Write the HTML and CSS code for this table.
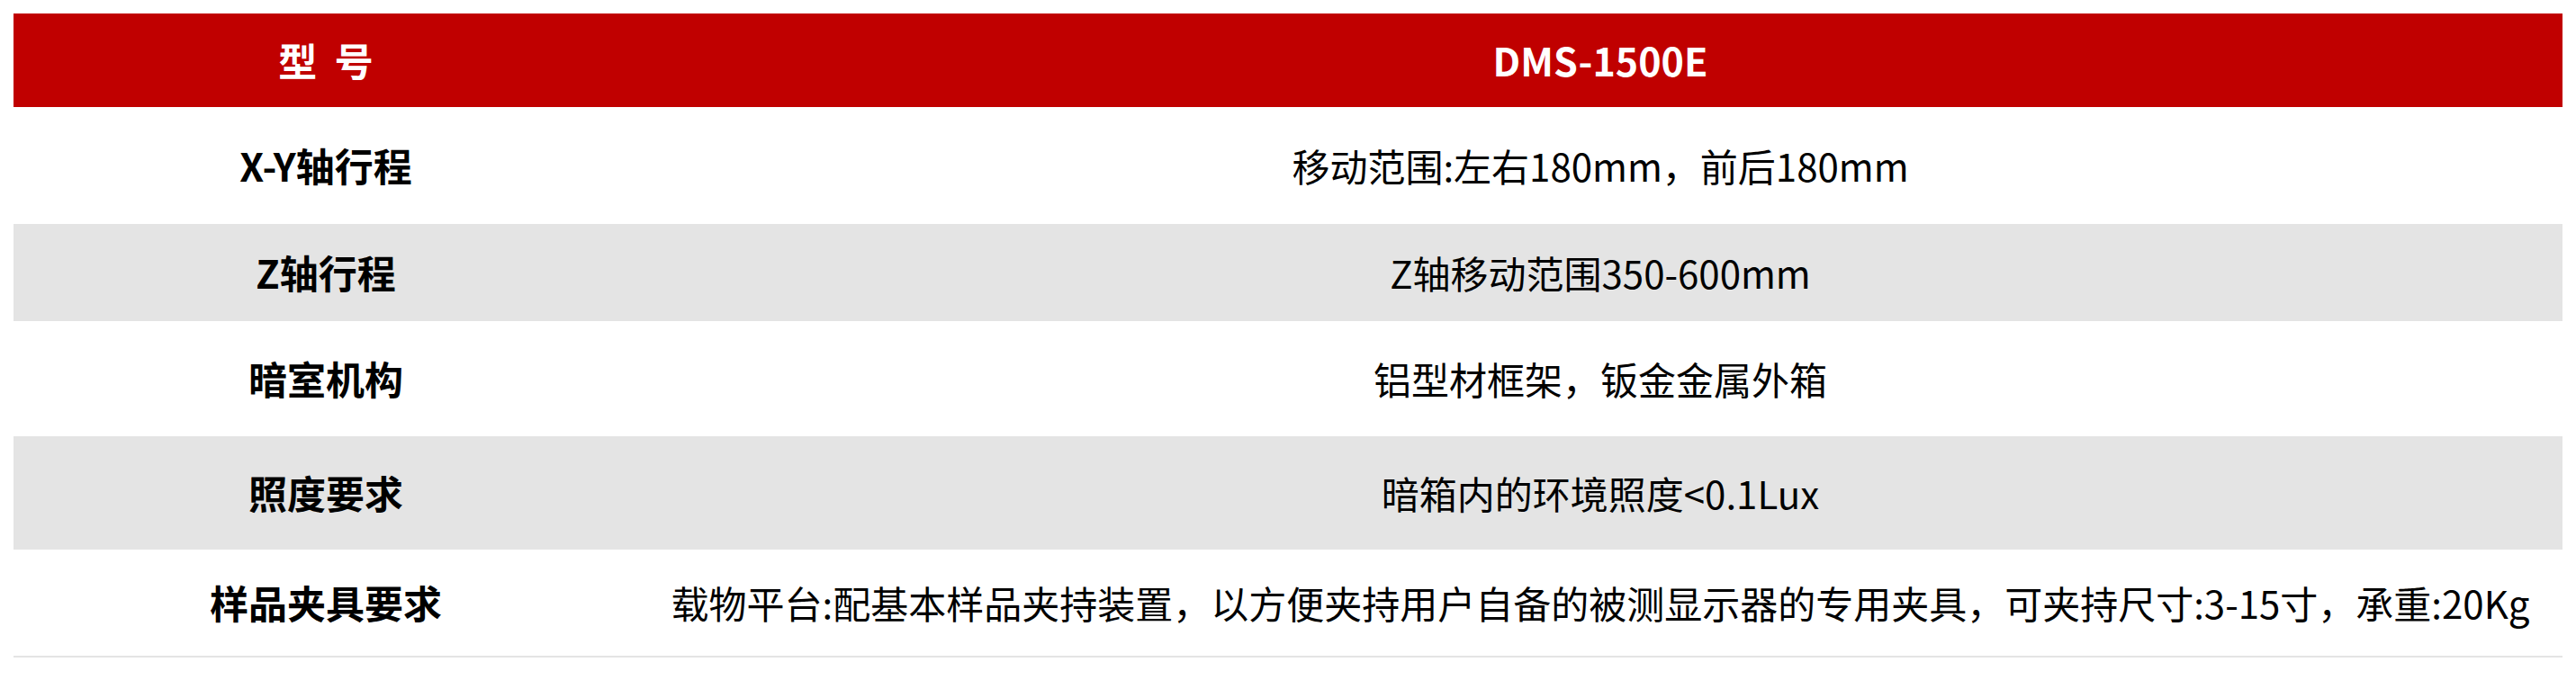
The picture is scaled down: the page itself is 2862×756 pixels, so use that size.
FILE: index.html
```html
<!DOCTYPE html>
<html lang="zh-CN">
<head>
<meta charset="utf-8">
<title>DMS-1500E 参数</title>
<link rel="stylesheet" href="styles.css">
</head>
<body>
<div class="page">
  <div class="spec">
    <div class="row head">
      <div class="cell label">型&nbsp;&nbsp;号</div>
      <div class="cell value">DMS-1500E</div>
    </div>
    <div class="row r1">
      <div class="cell label">X-Y轴行程</div>
      <div class="cell value">移动范围:左右180mm，前后180mm</div>
    </div>
    <div class="row r2 grey">
      <div class="cell label">Z轴行程</div>
      <div class="cell value">Z轴移动范围350-600mm</div>
    </div>
    <div class="row r3">
      <div class="cell label">暗室机构</div>
      <div class="cell value">铝型材框架，钣金金属外箱</div>
    </div>
    <div class="row r4 grey">
      <div class="cell label">照度要求</div>
      <div class="cell value">暗箱内的环境照度&lt;0.1Lux</div>
    </div>
    <div class="row r5 last">
      <div class="cell label">样品夹具要求</div>
      <div class="cell value">载物平台:配基本样品夹持装置，以方便夹持用户自备的被测显示器的专用夹具，可夹持尺寸:3-15寸，承重:20Kg</div>
    </div>
  </div>
</div>
</body>
</html>
```
FILE: styles.css
```css
html, body {
  margin: 0;
  padding: 0;
  background: #ffffff;
}
.page {
  padding: 15px;
  font-family: "Noto Sans CJK SC", "Noto Sans", sans-serif;
  color: #000000;
  font-size: 43px;
}
.spec {
  display: flex;
  flex-direction: column;
}
.row {
  display: grid;
  grid-template-columns: 694px 1fr;
  align-items: center;
}
.cell {
  text-align: center;
  white-space: nowrap;
  line-height: 1.2;
}
.label {
  font-weight: 700;
}
.value {
  font-weight: 400;
  font-size: 42px;
}
.head {
  background: #c00000;
  color: #ffffff;
  height: 104px;
}
.head .cell {
  font-weight: 700;
  font-size: 43px;
}
.r1 { height: 130px; }
.r2 { height: 108px; }
.r3 { height: 128px; }
.r4 { height: 126px; }
.r5 { height: 118px; }
.grey { background: #e4e4e4; }
.last { border-bottom: 2px solid #e4e4e4; }
```
